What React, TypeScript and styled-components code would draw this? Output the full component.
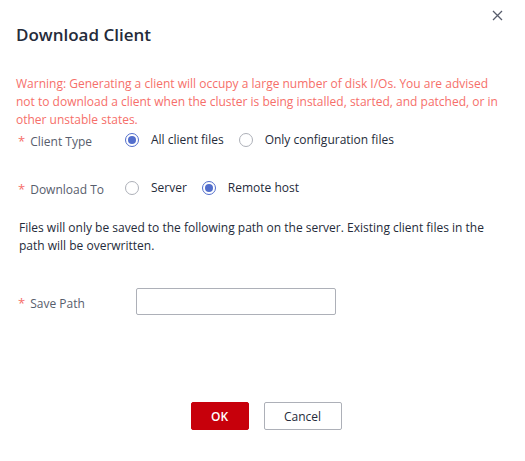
import React, { useState } from 'react'
import styled, { createGlobalStyle } from 'styled-components'

const GlobalStyle = createGlobalStyle`
  html, body {
    margin: 0;
    padding: 0;
    background: #ffffff;
  }
  body {
    font-family: "Open Sans", "Noto Sans", Arial, sans-serif;
    color: #252b3a;
  }
`

const Dialog = styled.div`
  width: 525px;
  height: 461px;
  box-sizing: border-box;
  display: flex;
  flex-direction: column;
  background: #fff;
`

const Header = styled.div`
  display: flex;
  justify-content: space-between;
  align-items: flex-start;
  padding: 9px 22px 0 16px;
`

const Title = styled.h2`
  margin: 14px 0 0;
  font-size: 17px;
  font-weight: 600;
  line-height: 24px;
  color: #252b3a;
`

const Close = styled.button`
  border: none;
  background: none;
  padding: 0;
  width: 12px;
  height: 12px;
  cursor: pointer;
  color: #575d6c;
`

const Body = styled.div`
  flex: 1;
  padding: 28px 16px 0 16px;
  font-size: 12px;
`

const Warning = styled.p`
  margin: 0;
  color: #f66f6a;
  line-height: 18px;
`

const Row = styled.div<{ $top: number }>`
  display: flex;
  align-items: center;
  margin-top: ${(p) => p.$top}px;
`

const Label = styled.div<{ $width?: number }>`
  width: ${(p) => p.$width ?? 107}px;
  padding-left: 2px;
  padding-top: 3px;
  display: flex;
  align-items: center;
  color: #575d6c;
  flex-shrink: 0;
`

const Star = styled.span`
  color: #f66f6a;
  margin-right: 5px;
  font-size: 13px;
`

const Radios = styled.div`
  display: flex;
  align-items: center;
  gap: 15px;
`

const RadioItem = styled.label`
  display: flex;
  align-items: center;
  gap: 12px;
  cursor: pointer;
  color: #252b3a;
`

const Circle = styled.span<{ $on: boolean }>`
  width: 14px;
  height: 14px;
  box-sizing: border-box;
  border-radius: 50%;
  border: 1px solid ${(p) => (p.$on ? '#526ecc' : '#adb0b8')};
  display: flex;
  align-items: center;
  justify-content: center;

  &::after {
    content: '';
    width: 8px;
    height: 8px;
    border-radius: 50%;
    background: #526ecc;
    display: ${(p) => (p.$on ? 'block' : 'none')};
  }
`

const Note = styled.p`
  margin: 21px 0 0 3px;
  line-height: 18px;
  color: #252b3a;
`

const Input = styled.input`
  width: 200px;
  height: 27px;
  box-sizing: border-box;
  border: 1px solid #adb0b8;
  border-radius: 2px;
  outline: none;
  padding: 0 8px;
  font: inherit;
`

const Footer = styled.div`
  display: flex;
  justify-content: center;
  gap: 15px;
  padding-bottom: 31px;
  padding-left: 7px;
`

const Button = styled.button<{ $primary?: boolean }>`
  height: 28px;
  min-width: ${(p) => (p.$primary ? 58 : 78)}px;
  box-sizing: border-box;
  border-radius: 2px;
  font: inherit;
  font-size: 12px;
  border: 1px solid ${(p) => (p.$primary ? '#c7000b' : '#adb0b8')};
  background: ${(p) => (p.$primary ? '#c7000b' : '#fff')};
  color: ${(p) => (p.$primary ? '#fff' : '#252b3a')};
  font-weight: ${(p) => (p.$primary ? 600 : 400)};
  cursor: pointer;
`

type RadioProps = { on: boolean; label: string; onClick: () => void }

const Radio = ({ on, label, onClick }: RadioProps): JSX.Element => (
  <RadioItem onClick={onClick}>
    <Circle $on={on} />
    {label}
  </RadioItem>
)

const App = (): JSX.Element => {
  const [type, setType] = useState('all')
  const [target, setTarget] = useState('remote')

  return (
    <Dialog>
      <GlobalStyle />
      <Header>
        <Title>Download Client</Title>
        <Close aria-label="close">
          <svg width="11" height="11" viewBox="0 0 11 11">
            <path d="M1 1L10 10M10 1L1 10" stroke="#575d6c" strokeWidth="1.3" />
          </svg>
        </Close>
      </Header>
      <Body>
        <Warning>
          Warning: Generating a client will occupy a large number of disk I/Os. You are advised
          not to download a client when the cluster is being installed, started, and patched, or in
          other unstable states.
        </Warning>
        <Row $top={0}>
          <Label><Star>*</Star>Client Type</Label>
          <Radios>
            <Radio on={type === 'all'} label="All client files" onClick={() => setType('all')} />
            <Radio on={type === 'conf'} label="Only configuration files" onClick={() => setType('conf')} />
          </Radios>
        </Row>
        <Row $top={27}>
          <Label><Star>*</Star>Download To</Label>
          <Radios>
            <Radio on={target === 'server'} label="Server" onClick={() => setTarget('server')} />
            <Radio on={target === 'remote'} label="Remote host" onClick={() => setTarget('remote')} />
          </Radios>
        </Row>
        <Note>
          Files will only be saved to the following path on the server. Existing client files in the
          path will be overwritten.
        </Note>
        <Row $top={33}>
          <Label $width={118}><Star>*</Star>Save Path</Label>
          <Input />
        </Row>
      </Body>
      <Footer>
        <Button $primary>OK</Button>
        <Button>Cancel</Button>
      </Footer>
    </Dialog>
  )
}

export default App
